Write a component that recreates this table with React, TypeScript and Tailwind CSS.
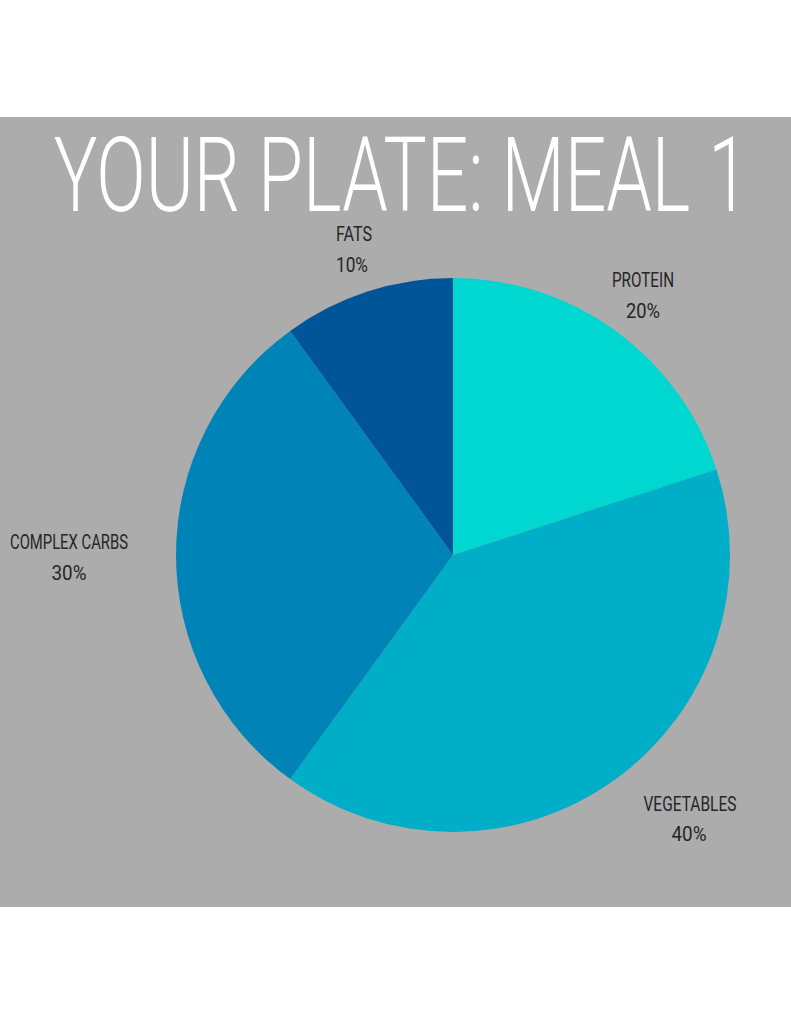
import React from 'react';

const slices = [
  { name: 'protein', color: '#00d7d0', d: 'M453 555 L453 278 A277 277 0 0 1 716.44 469.4 Z' },
  { name: 'vegetables', color: '#00aec8', d: 'M453 555 L716.44 469.4 A277 277 0 0 1 290.18 779.1 Z' },
  { name: 'carbs', color: '#0083b7', d: 'M453 555 L290.18 779.1 A277 277 0 0 1 290.18 330.9 Z' },
  { name: 'fats', color: '#005598', d: 'M453 555 L290.18 330.9 A277 277 0 0 1 453 278 Z' },
];

const labels = [
  { text: 'FATS', x: 354, y: 241, w: 36 },
  { text: '10%', x: 352, y: 272, w: 32 },
  { text: 'PROTEIN', x: 643, y: 287, w: 62 },
  { text: '20%', x: 643, y: 318, w: 34 },
  { text: 'COMPLEX CARBS', x: 69, y: 549, w: 118 },
  { text: '30%', x: 69, y: 580, w: 35 },
  { text: 'VEGETABLES', x: 690, y: 811, w: 93 },
  { text: '40%', x: 689, y: 841, w: 35 },
];

export default function App() {
  return (
    <div className="min-h-[1024px] w-full bg-white pt-[117px]">
      <section className="flex h-[790px] w-full flex-col bg-[#acacac]">
        <div className="flex h-[111px] items-start justify-center pl-[11px] pt-[18px]">
          <h1
            className="inline-block origin-center scale-x-[0.709] whitespace-nowrap text-[103px] font-light leading-[0.8] text-white"
            style={{ fontFamily: 'Roboto, "Liberation Sans", sans-serif' }}
          >
            YOUR PLATE: MEAL 1
          </h1>
        </div>
        <svg
          className="block h-[679px] w-full overflow-visible"
          viewBox="0 228 791 679"
          style={{ fontFamily: 'Roboto, "Liberation Sans", sans-serif' }}
        >
          {slices.map((s) => (
            <path key={s.name} d={s.d} fill={s.color} />
          ))}
          {labels.map((l) => (
            <text
              key={l.text}
              x={l.x}
              y={l.y}
              textAnchor="middle"
              textLength={l.w}
              lengthAdjust="spacingAndGlyphs"
              fontSize={21}
              fill="#262626"
            >
              {l.text}
            </text>
          ))}
        </svg>
      </section>
    </div>
  );
}
